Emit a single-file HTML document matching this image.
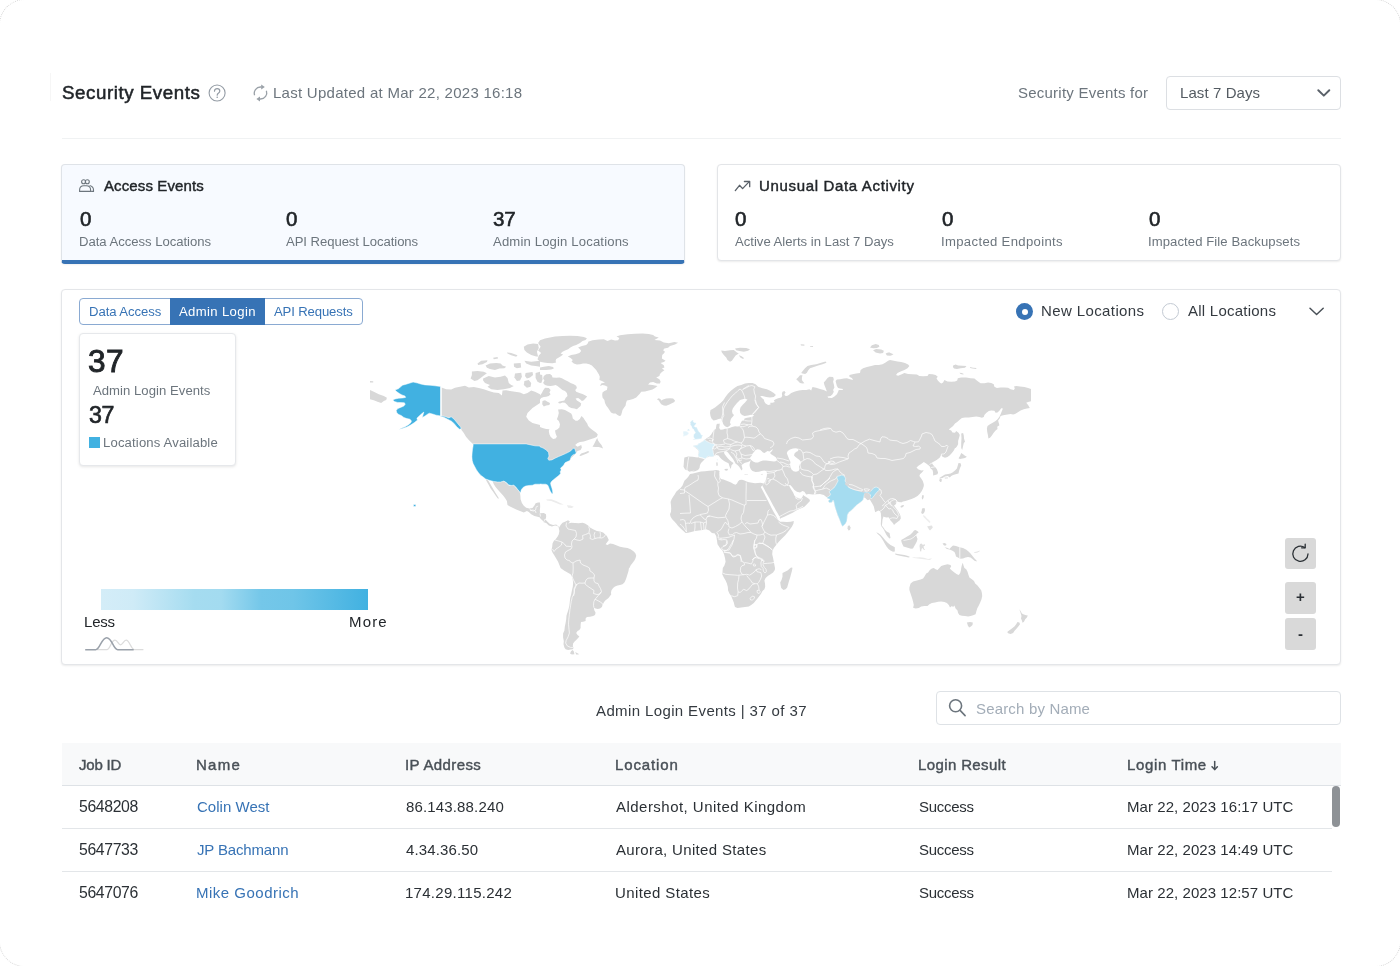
<!DOCTYPE html>
<html lang="en"><head><meta charset="utf-8"><title>Security Events</title>
<style>
html,body{margin:0;padding:0;background:#fff;}
body{width:1400px;height:966px;position:relative;overflow:hidden;font-family:"Liberation Sans",sans-serif;color:#212529;}
.t{position:absolute;white-space:nowrap;line-height:1;will-change:transform;}
.b{position:absolute;box-sizing:border-box;}
svg{position:absolute;overflow:visible;}
</style></head>
<body>
<div class="b" style="left:-1px;top:-1px;width:1402px;height:968px;border:1px dotted #d8d8d8;border-radius:26px;"></div>
<div class="b" style="left:50px;top:73px;width:1px;height:28px;background:#f6f6f6;"></div>
<div class="b" style="left:62px;top:138px;width:1279px;height:1px;background:#f0f2f3;"></div>
<div class="b" style="left:1166px;top:76px;width:175px;height:34px;border:1px solid #dcdfe3;border-radius:4px;background:#fff;"></div>
<div class="b" style="left:61px;top:164px;width:624px;height:100px;border:1px solid #dfe3e8;border-bottom:4px solid #3773b5;border-radius:4px;background:#f7faff;box-shadow:0 1px 2px rgba(0,0,0,.06);"></div>
<div class="b" style="left:717px;top:164px;width:624px;height:97px;border:1px solid #e3e5e8;border-radius:4px;background:#fff;box-shadow:0 1px 2px rgba(0,0,0,.08);"></div>
<div class="b" style="left:61px;top:289px;width:1280px;height:376px;border:1px solid #e4e6e9;border-radius:4px;background:#fff;box-shadow:0 1px 2px rgba(0,0,0,.08);"></div>
<div class="b" style="left:79px;top:298px;width:284px;height:27px;border:1px solid #8aaad2;border-radius:4px;background:#fff;"></div>
<div class="b" style="left:170px;top:298px;width:95px;height:27px;background:#3773b5;"></div>
<div class="b" style="left:79px;top:333px;width:157px;height:133px;border:1px solid #e6e8eb;border-radius:4px;background:#fff;box-shadow:0 1px 3px rgba(0,0,0,.10);"></div>
<div class="b" style="left:88.6px;top:437.4px;width:11px;height:11px;background:#41b1e1;"></div>
<div class="b" style="left:101px;top:588.5px;width:267px;height:21.5px;background:linear-gradient(90deg,#d4edf8 0%,#cfebf7 12%,#a5dcf0 35%,#a3dbf0 45%,#74c7e9 60%,#6fc5e8 72%,#41b1e1 100%);"></div>
<div class="b" style="left:1016px;top:303px;width:17px;height:17px;border-radius:50%;background:#3773b5;"></div>
<div class="b" style="left:1021.5px;top:308.5px;width:6px;height:6px;border-radius:50%;background:#fff;"></div>
<div class="b" style="left:1161.5px;top:303px;width:17px;height:17px;border-radius:50%;border:1px solid #c3cad3;background:#fff;"></div>
<div class="b" style="left:1285px;top:538.3px;width:31px;height:31.2px;border-radius:3px;background:#d9d9d9;"></div>
<div class="b" style="left:1285px;top:581.6px;width:31px;height:32px;border-radius:3px;background:#d9d9d9;"></div>
<div class="b" style="left:1285px;top:618px;width:31px;height:32px;border-radius:3px;background:#d9d9d9;"></div>
<div class="b" style="left:936px;top:691px;width:405px;height:34px;border:1px solid #dee2e6;border-radius:4px;background:#fff;"></div>
<div class="b" style="left:62px;top:743px;width:1279px;height:42px;background:#f8f9fa;"></div>
<div class="b" style="left:62px;top:785px;width:1279px;height:1px;background:#dee2e6;"></div>
<div class="b" style="left:62px;top:828px;width:1270px;height:1px;background:#e3e6e9;"></div>
<div class="b" style="left:62px;top:871px;width:1270px;height:1px;background:#e3e6e9;"></div>
<div class="b" style="left:1331.5px;top:786px;width:8.5px;height:40.5px;border-radius:4px;background:#8e9296;"></div>
<svg style="left:0;top:0" width="1400" height="966" viewBox="0 0 1400 966">
<defs><clipPath id="mc"><rect x="370" y="330" width="661" height="328"/></clipPath></defs>
<g clip-path="url(#mc)" stroke-linejoin="round">
<g fill="#d8d8d8">
<path d="M370,390.1 373.8,391.8 378.8,394.2 383.8,396.1 386.9,397.8 386.2,399.9 383.8,401.1 381.2,403 377.5,401.8 373.8,400.2 370,399.2Z"/>
<path d="M370,381 373.2,381.2 373.2,382.6 370,382.6Z"/>
<path d="M588.1,341.8 592.5,340.2 598.8,339.5 603.8,339.2 607.5,340.9 611.2,339.5 615,340.5 618.1,340.2 619.4,338 616.5,336.5 620,335.2 627.5,334.2 635,333.8 642.5,333.5 648.8,333.9 653.1,334.9 655,336.5 658.8,337.4 654.4,340.1 660,340.5 663.8,342.4 668.8,343.2 674.4,342 678.1,342.8 675,344.5 670,345.9 668.1,347.8 664.4,348.6 663.1,350.2 665,351.8 663.8,353.6 662.2,354.9 661.9,358.6 665.6,360.8 663.8,362 660.6,363 663.8,365.2 664.4,367.4 661.9,368.6 664.4,370.2 661.9,372 660,374 659.4,376.1 656.2,377.4 659.4,379.2 660.6,381.5 660,383.6 656.9,383.4 653.1,382.1 650,382.6 648.1,384.5 652.5,385.1 657.5,386.1 655,388 652.5,389.5 648.8,390.5 645,391.5 641.2,391.8 640,393.6 638.1,395.5 636.2,397.4 633.1,399 629.4,399.9 626.9,400.5 626,403 625.6,405.5 623.8,408 622.5,409.9 621.9,412.4 621,415.5 619.4,415.9 617.5,414.9 615.6,413.6 613.1,413.6 611,412.4 609.4,409.9 608.1,408 606.2,405.5 605,403 604.4,399.9 602.5,397.4 602.2,394.9 602.5,392.4 604.4,391.1 606.9,389.9 607.5,386.8 605,385.5 602.5,384.9 600,386.1 601.2,383.6 605,382.4 601.9,381.1 599.4,379.9 599.8,376.8 598.8,374.2 597.2,371.8 596.2,369.9 593.8,367.4 591.9,365.5 589.4,364.2 586.2,363.6 583.1,363.6 580,364.2 576.9,364.6 573.8,363.6 571.5,361.5 572.8,359.9 570.6,358 567.8,356.5 571.2,354.9 575.6,354.2 579.4,353 581.2,351.1 580,349.2 578.1,347.4 581.9,346.1 586.2,344.9 588.1,343Z"/>
<path d="M656.9,399.2 658.8,398.2 660.6,399.2 661.2,400.5 663.1,399.5 666.2,398.6 670,398.2 673.1,398.6 675,400.5 674.4,402 671.9,403.2 669.4,404.5 666.2,405.8 663.8,405.5 661.2,404.2 660,402.4 658.8,400.5Z"/>
<path d="M441.5,387.4 446.2,389.2 451.2,389.5 455,387.8 460,386.8 465,385.8 468.8,387.4 473.8,387 478.8,388 483.8,389.2 488.8,391.1 493.8,392.4 498.8,393 501.9,395.5 502.5,390.5 506.2,390.2 510,391.1 515,391.8 520,392.4 523.8,394.2 527.5,393 531.2,390.5 535,391.8 540,394.2 540,395.5 541.9,393 543.1,390.5 545,387.8 548.8,388 550.6,389.9 549.4,392.4 550.6,394.2 548.8,396.1 546.2,396.8 543.8,397 541.2,398 540,399.5 540,403 532.5,408 527.5,413 526.2,416.8 528.8,420.5 532.5,423 540,424.9 540,427 542.5,428 546.2,429 549.4,429.2 548.8,431.1 549.4,434.2 550.6,436.8 553.1,439 555.6,438.6 556.9,436.8 555.6,433.6 555,430.5 557.5,429.2 559.4,427.4 560,424.2 558.8,421.1 556.9,419.2 558.1,416.1 558.8,413 558.1,409.5 561.9,409.2 565,409.9 568.1,411.8 571.2,413.6 572.2,415.5 572.8,418.6 575.6,420.8 577.5,420.8 579.8,419 581.5,416.1 583.5,418 585.2,420.8 587.2,423.6 588.1,426.1 590,428 592.8,430.2 596,432.4 597.8,434.5 596.9,436.8 594.4,438 591.2,439 587.5,440.2 583.8,441.5 580,442 577.5,443 575.2,444.9 577.5,446.8 581.2,444.9 581.9,447.4 580.6,449.9 577.5,451.1 576.2,453 571.2,458 558.8,465.5 490,463 475,445.8 471.9,443 468.8,439.9 466,436.8 463.8,433 461.5,429.9 460.6,427.4 457.5,423.6 454,419.2 451.2,417 446.2,417.8 441.5,415.8Z"/>
<path d="M579.4,455.5 581.2,453.6 584.4,452.4 588.1,451.1 589.4,452 586.9,453.6 583.1,454.9 580.6,456.1Z"/>
<path d="M592.5,446.8 594,444.2 595.6,441.1 597.2,438 598.1,440.5 599.8,443 601.5,444.9 603.1,448.6 601.2,447.8 598.8,447 595.6,447Z"/>
<path d="M471.9,371.5 477.5,371.1 483.8,371.8 486.9,373.2 483.8,375.5 480.6,378 477.5,380.2 474.4,381.1 470.6,378.6 471.9,374.9Z"/>
<path d="M483.1,378.6 488.8,376.1 495,377.4 500.6,376.8 505,375.5 507.5,378 508.8,383 511.2,384.9 513.8,386.1 510,388 503.8,389.2 497.5,389.9 491.2,389.2 487.5,386.8 490,384.9 485,383 483.1,380.5Z"/>
<path d="M477.5,363.6 481.2,360.8 487.5,360.2 486.9,362 482.5,364.2 478.1,365.1Z"/>
<path d="M485.6,365.5 490,363.6 496.2,363 500.6,363.6 502.5,365.5 506.2,366.8 504.4,368.2 499.4,368.6 495,369.9 490,369 486.9,367.8Z"/>
<path d="M506.9,352.4 511.2,353 517.5,355.2 516.2,356.8 511.2,355.2 507.5,353.6Z"/>
<path d="M493.1,357.8 497.5,357 498.1,358.6 493.8,359.2Z"/>
<path d="M513.8,363.6 520.6,363 521.2,367.4 516.9,368.2 514,366.8Z"/>
<path d="M515,373.6 521.2,372.8 521.9,376.8 520,380.5 516.9,381.1 514.4,377.4Z"/>
<path d="M525.6,373 532.5,372 533.1,374.9 530,377.4 526.9,378.6 525,376.1Z"/>
<path d="M524.4,381.1 528.8,379.9 531.2,383 530.6,386.8 526.9,387.8 523.8,384.9Z"/>
<path d="M523.8,346.8 527.5,344.5 533.1,343.6 538.1,344 538.8,348 536.9,351.8 538.1,356.5 536.2,356.5 531.2,354.9 526.9,352.4 524.4,349.9Z"/>
<path d="M524.4,360.8 531.2,361.8 540,360.8 540,366.8 535.6,366.1 531.2,365.5 526.2,363.6Z"/>
<path d="M535.6,373 540,371.8 540,383 537.5,381.8 535.6,378Z"/>
<path d="M540,340.2 545,338.6 550,337.4 555,336.5 562.5,336.1 570,335.8 577.5,336.1 583.8,337 586.9,338.2 585.6,339.9 582.5,341.1 580,343 576.2,344.9 573.1,346.1 570,347.8 568.1,349.2 565,350.5 562.5,351.8 560.6,353.6 563.1,354.5 561.2,356.1 558.8,357.4 556.2,359 555.6,361.1 556.2,362.4 552.5,363.2 547.5,363 543.8,362.4 540,361.8 537.5,359.2 538.8,355.5 541.2,353 538.1,350.5 540.6,346.8 538.1,343Z"/>
<path d="M540,367.4 543.8,366.8 548.8,366.1 553.1,367 553.8,368.6 551.2,369.6 546.2,370.1 540,369.9Z"/>
<path d="M543.8,376.1 546.2,374.2 550,374 551.9,375.5 552.5,377.4 556.2,377.8 559.4,377.4 561.9,378.2 565,379.9 568.1,381.5 570.6,383 573.8,384.2 576.2,385.8 576.9,388 575.2,389.9 576.2,391.8 579.4,393 582.5,394 585,395.2 587.2,396.5 585.6,398.2 583.8,400.2 581.9,400.9 580,399.2 578.1,398 575.6,398.6 576.9,400.5 579.4,402 581.2,403.6 580.6,406.1 578.8,407.4 576.9,409.2 574.4,408.6 571.2,408 568.8,406.8 566.9,404.5 565,402.8 562.5,402.4 560,403.6 558.1,403 558.8,401.8 561.9,401.1 564.4,400.5 565.6,398 567.5,396.1 566.9,393 565,391.1 562.5,389.9 560,388 557.5,386.1 555.6,384.9 553.8,385.5 550.6,386.1 547.5,385.8 545,384.9 543.1,383 544.4,380.5 543.1,378.6Z"/>
</g>
<g fill="#ffffff">
<path d="M559.4,392 561.5,391.8 562.2,393.6 560.6,394.5 559.1,393.6Z"/>
</g>
<g fill="#d8d8d8">
<path d="M540,374.5 542.2,374.9 542.5,379.2 541.5,382.8 540,383Z"/>
<path d="M542.5,401.1 545,400.2 547.5,401.8 550,403 549.4,404.9 546.2,405.5 543.8,406.5 542.2,404.2Z"/>
<path d="M485.6,479.2 488.1,480.2 490,483.6 491.9,486.8 493.8,489.9 495.6,493 497.5,496.1 499,498.6 497.8,498.4 495.6,495.5 493.1,491.8 490.6,488.6 488.8,484.9 486.9,481.8Z"/>
<path d="M492.5,480.8 496.2,482 500,482 503.1,481.1 505.6,482.4 507.5,484.2 509.4,486.1 512.5,485.2 514.4,486.1 516.2,488 518.1,490.5 520,492.8 520.4,496.1 520.6,499.2 521.9,503 523.8,505.8 526.2,507.8 529.4,508.6 532.5,508 534.4,505.5 535.6,503.2 538.1,502.6 540,502.6 540.2,506.8 539.8,510.5 540,513.2 543.8,513 546,514.2 546.2,516.8 545.6,519.5 547.5,521.8 550,524 553.1,524.9 556.2,524.5 558.8,526.8 558.8,528 557.5,526.1 555,525.5 551.9,526.5 548.8,525.5 546.2,523 543.1,522 543.8,521.5 541.9,519.9 540,518 540,517.4 537.5,516.8 534.4,516.1 531.2,514.2 528.8,512 526.9,511.1 523.8,512.4 520,511.1 516.2,509.5 513.1,508 510,506.5 507.5,504.9 506.9,501.1 505,498 503.1,495.5 500.6,492.8 498.1,489.9 495.6,487 493.8,484.2Z"/>
</g>
<g fill="#ececec">
<path d="M546.2,499.5 551.2,499.2 556.2,501.1 560.6,503.2 563.8,504.5 560,504.5 555.6,502.8 551.2,501.1 546.9,500.5Z"/>
<path d="M566.9,505.2 570.6,505.5 573.8,506.8 571.9,508 568.1,507.8Z"/>
</g>
<g fill="#d8d8d8">
<path d="M558.8,528 560.6,524.9 562.5,522.8 565,521.8 568.1,520.2 570,521.8 568.1,523.6 571.2,522.8 575,523 578.8,523.2 582.5,522.8 585,523.6 588.1,525.5 590,527.4 593.1,529.2 596.9,531.1 600,531.5 603.1,532.4 605,534.2 606.9,536.1 608.8,539.9 607.5,541.8 605.6,544.2 607.5,544.9 610,543.6 613.1,544 616.2,545.2 620,546.8 623.8,547.6 627.5,548 630.6,549.2 633.1,551.1 635.2,553 636.2,555.5 635.6,558 634.4,560.5 632.5,563 630.6,565.5 629.4,568 629,568 628.5,571.1 627.5,574.2 626.5,577.4 625.6,579.9 624.4,582.4 622.5,584.2 620,584.9 617.5,585.5 615,586.5 613.1,588 611.5,590.2 611,592.4 611.2,594.5 610,596.1 608.5,598 606.9,599.2 605,600.8 603.8,602.4 602.5,604.9 601.9,607 600,608.6 597.8,609 595.6,608.6 593.8,607.8 594.4,610.5 595.6,612.8 595,614.9 593.1,616.1 590,616.8 586.9,617 585.6,618.6 585.6,621.1 583.1,621.8 581,622 580.6,624.9 580.6,628 579.4,629.9 577.5,631.1 576.2,633 577.5,634.9 579.4,636.5 578.1,638 576.2,639.9 574.4,641.8 573.1,643.6 572.8,646.1 573.5,648 572.8,649.2 570.6,649.5 568.1,649.9 565.6,649.2 564.4,647.4 563.5,644.2 563.8,641.1 563.1,637.4 563.1,633.6 564.4,630.5 564.8,626.8 565.6,623 566.2,619.2 566.5,615.5 567.5,612.4 568.5,609.2 569.4,605.5 569.8,601.8 570.2,598 571.2,594.2 571.9,590.5 572.8,586.8 573.1,583 572.8,579.9 571.9,576.8 570.6,574.2 567.5,572.4 564.4,570.8 561.2,568.6 560.6,568 559.4,564.9 558.1,561.8 556.2,558.6 554.4,555.5 552.5,552.4 551.5,549.9 552.2,546.8 552.5,543.6 553.8,541.1 555.6,539.2 557.5,536.8 558.8,534.2 559.4,531.1Z"/>
<path d="M570,653.6 571.2,651.1 572.8,649.9 573.8,651.5 574.4,654.2 571.9,654.5Z"/>
<path d="M575.2,652 577.5,653.2 579,654.5 576.2,654.5Z"/>
<path d="M722,420 721,418.5 718.5,419 716,420 713.5,420.5 711.5,418.5 710.5,416 710,413 710.5,410 712.5,409 715,407.5 717.5,405.5 720.6,403 723.1,400.5 725.6,396.8 728.1,393.6 731.2,390.5 734.4,388 737.5,386.1 741.2,384.9 745,383.6 748.8,383 752.5,383 755.6,384.2 758.1,386.8 762.5,388.2 766.9,389.2 770.6,391.1 773.8,393 775.9,395.1 773.8,397 770,397.6 766.2,397 762.5,396.1 760.2,396.1 761.9,398 763.8,399.5 764.4,401.8 765.6,403.6 768.1,404.9 770.6,404.5 770.2,402.8 772.5,402.8 774.8,402 773.8,400.5 775.6,399.2 778.1,398.2 781.2,397.6 782.2,396.1 781.9,393.6 782.5,391.8 784.4,391.1 785.6,392.4 784.4,394.2 785,395.8 786.9,396.1 788.8,394.9 791.2,393 795,391.5 798.8,390.5 802.5,390.1 806.2,389.9 809.4,389.2 811.2,390.5 811.9,388.6 812.5,387 816.2,387.8 820,388.9 823.8,390.1 826.9,391.5 825.6,388 824.4,384.9 823.8,382.4 825.6,380.5 827.5,378 829.4,376.8 833.1,377 833.8,379.2 833.1,381.8 833.8,384.2 834.4,387.4 833.1,389.9 833.8,391.8 832.5,394.2 830.6,396.1 827.5,396.5 828.1,397.8 831.9,398 834.4,396.5 836.9,394.2 838.1,391.8 838.8,390.1 842.5,390.1 843.1,389 840,388.6 838.1,388 836.9,386.1 836.2,383.6 835.6,381.1 836.9,379.5 840,379.2 843.8,378.6 846.9,378.2 850,379.2 853.1,379.9 851.9,378 849.4,376.8 849.4,374.9 852.5,374.2 856.2,373.6 860,373 860.6,369.9 863.1,368.2 866.9,367 871.2,366.1 875,364.9 878.8,364.9 882.5,364.2 885.6,362.4 888.1,360.8 890,359.9 890,359.9 893.8,360.8 897.5,361.5 901.2,362 905,363 908.1,364.5 909.4,366.1 907.5,368.2 904.4,369.9 900.6,371.5 897.5,373 896,374.9 898.1,375.8 901.2,374.5 904.4,373 908.1,374 912.5,374.2 916.9,374.5 919.4,375.9 923.1,376.2 927.5,375.9 928.8,374 932.5,374.2 935.6,374.9 937.8,376.8 936.5,378.2 937.8,380.5 940,382.8 941.5,383.6 943.1,382.4 944.4,379.9 947.5,381.5 951.2,381.8 955,381.5 957.2,380.5 957.8,378.2 961.2,377.4 966.2,377.6 970.6,378.2 974.4,378.6 976.2,379.9 978.1,381.5 980.6,383.2 984.4,383.2 988.1,382.6 991.2,383 993.8,384.2 994.4,386.8 996.9,388 1000.6,387.6 1004.4,387.4 1008.1,387.8 1010.6,389.2 1013.8,389.9 1014.8,388.6 1014,386.4 1016.2,386.1 1020,386.5 1024.4,387.1 1028.1,388 1031.9,389.2 1031.9,401.1 1028.1,402 1026.2,402.8 1028.1,404.9 1029.8,408 1026.9,408.6 1023.8,409.2 1020.6,410.5 1017.5,412.4 1015,414 1013.1,414.6 1010.6,414 1007.5,414.5 1004.4,414.9 1002.2,415.5 1000.6,416.1 999.8,418.2 998.1,420.5 998.8,423 999.4,425.2 997.2,426.8 997.5,429 995.6,430.5 993.5,433 991.9,435.5 990,437.8 988.4,438.6 987.9,434.9 987.2,431.8 986.9,428.6 987.5,426.1 990,424.2 993.1,422.4 995.6,421.1 997.5,419.2 999.4,416.8 1000.6,414.2 1001.9,411.1 1002.9,408.6 1001.2,408.2 999.8,410.2 997.5,412.4 995.6,412.8 994.4,410.8 991.2,410.5 988.8,411.1 986.2,413 984.4,414.9 983.8,417 981.9,417.8 979.4,417 976.2,416.5 972.5,417.1 968.8,417.4 965,417.4 961.9,418 959.4,419.9 957.5,421.8 955,423.6 953.1,426.1 950.6,428 948.8,429.5 951.2,430.5 952.5,432.4 955,432.8 956.2,431.1 958.5,432.8 959.8,434.9 959,438 958.1,441.1 958.1,444.2 956.9,446.5 955.6,448 955,448 953.8,450.5 951.9,453 949.8,455.2 947.5,457 945,457.8 942.5,456.8 941.2,454.9 940,457.4 938.1,459.2 936.2,460.5 933.8,461.8 931.9,463 933.1,464.9 935,466.8 936.9,469.2 938.1,472.4 937.5,474.2 935,474.9 933.1,475.5 933.1,472.4 932.5,469.9 930.6,468.6 930,466.8 928.8,465.5 926.2,463.6 923.8,462 921.2,464 918.8,465.5 916.5,467.4 918.1,469.2 921.2,470.5 923.8,470.2 921.9,472.4 920,474.2 919.4,476.1 921.2,478.6 922.8,481.1 923.8,484.2 923.8,486 923,488.5 921.8,491 920,493.5 917.5,496 914.5,497.8 911.5,499 908.5,500 905.5,501 903,501.5 901,502.5 899,502 897,501.5 896.5,503 895.5,504.5 894,505.5 895,507 896.5,509 898,511 899.5,513.5 900.5,516 900.8,518.5 899.5,520.5 897.5,522 895.5,523.5 894,525 893.5,524 892,522 890.5,520.5 889.5,518.5 888.5,517.2 886.5,517.5 884.5,517 883.5,516.5 883,518 882.5,519.5 882.2,523 881.8,525.5 883,527 884.5,529 886,531 887.5,532 889.5,533 890,535.5 890.5,538 889.5,538.5 888,537 886.5,535 885.2,532.5 884,530 882.5,527.8 881.2,526 880.8,524 881,521 881.2,518 881,515 880.8,513 880,511.2 878.5,510.5 877,511.2 875.2,512.2 874.5,509.5 873.8,506.5 872.5,504 871,501.5 869.5,499 867.5,499.9 865.6,498 863.8,497.4 863.1,499.9 861.2,501.8 858.8,503.6 856.2,505.5 853.8,508 851.2,510.5 848.8,512.4 847.5,514.9 847.2,518 846.9,521.1 845.6,523.6 843.8,525.5 842.5,526.5 841.2,524.2 840,521.1 838.8,518 837.5,514.9 836.2,511.1 835.2,508 834.4,504.9 833.8,501.8 833.1,500.2 831.9,502.4 829.4,502.8 828.1,501.1 829.8,499.2 827.5,498.6 826.9,497.4 823.8,494.9 820,494 816.2,494.2 812.5,494.5 808.8,494 806.2,494.5 804.4,491.8 802.5,491.1 800,492.4 796.9,491.8 794.4,489.9 792.5,487.4 790.6,485.2 788.8,484.9 790,487.4 791.5,489.9 793.1,492.4 794.4,495.5 796.2,497.4 798.8,498 801.2,498.6 802.5,496.8 803.1,494.9 804.4,496.1 806.9,497.4 809.4,499.2 810,501.1 808.1,503 806.2,504.9 804.4,506.8 801.9,508 798.8,509.2 796.2,510.5 793.1,512.4 790,514 786.9,515.5 783.8,517 780.6,518.2 780,519.5 780,518 779.1,516.1 777.8,513.5 776.1,510.8 774.5,507.8 772.9,504.9 771.2,501.8 769.5,498.5 767.6,495.2 765.6,491.8 763.8,488.2 762.2,485.5 764.2,483.5 765,481.5 766,479 766.8,476 767,473.5 766.5,471 764,470.5 761.5,471 759,471.8 755.5,472 752.5,471 751,469.5 750,467.5 749.5,465 750,462.5 751,460 750,461 748,462 746,462.5 744.5,463 743,464 741.5,465 742,467 742.5,469 741.5,470.5 740,468 739,466.5 737.5,465 735.5,463.5 734.5,461.5 733,459 731,456.5 729.5,454.5 728,452.5 726.5,451.2 725,451.2 724,452.5 724.5,454 726,456 728,458.5 730,460.5 732,462 733.5,463 732.5,464.2 731.5,465.2 731.2,467 730.5,469 729.8,467 729,465 728.8,463.5 727,462.5 724.5,461.2 722,459.5 720,457.5 718.5,455.5 716.5,455 714.5,455.5 712.5,457 709.5,456.8 706.5,457.5 705,459 703,461 701,463 700,465 699.5,468 698,470 695,471.2 692,471.8 690,472.2 695,470.5 691.9,471.1 689.4,471.8 687.5,470.5 685,469.5 683.5,466.8 683.8,463.6 684,460.5 684.4,457.4 688.1,456.5 692.5,456.8 697.5,457.4 698.5,457 698.2,454.5 698.8,451.5 697.5,449.5 695,447.5 693,446 695.5,445.2 698.5,444.5 700.5,443 703,441 705,439.5 707,438 709.5,436.5 711.2,434.5 712.5,432.2 714,430 715.8,429 716.2,426.5 716.5,424.5 718,423.5 719.5,424.2 720,422.5Z"/>
<path d="M764.2,483.5 762.5,483.2 760.5,482.8 758,483 755,483.2 752,482.8 749,482.2 746.5,481.5 744.5,480.5 742,479.8 739.5,480 738,481.5 737,483.5 735.5,484.8 733.5,484 731,482.5 728.5,481.5 726,480.5 723.5,479.5 721,479 720,477.5 719.5,475 720,472.5 719,470.5 716.2,470 713,470.5 709,470.8 705,471.2 701,471.5 697,472.5 693,473.5 690,474 689.4,474.9 688.1,477 686.2,479 684.4,480.8 683.5,483 682.5,485.5 680.6,488 678.1,489.9 676.2,491.8 674.8,494.2 673.1,496.8 671.5,499.5 670.6,502 671,505.5 671.2,508.6 671,511.8 670,514.2 670.6,516.8 672.2,519.2 674.4,521.5 676.2,523.6 678.1,526.1 680.6,528.6 683.1,530.8 685.6,533 688.1,532.8 691.2,532 695,531.1 698.8,530.5 702.5,529.9 706.2,529.2 709.4,530.5 711.9,533 715,533.6 715,534 716.2,536.1 716.9,539.9 717.5,544.2 720,548 722.5,550.8 724,554.2 725,558 725.6,561.8 724.4,565.5 722.8,568 722.8,568 722.5,571.8 722.2,574.2 723.8,577.4 725.6,580.5 726.9,583.6 727.8,586.8 728.1,590.5 729.4,593.6 731.2,596.1 732.5,599.2 733.8,602.4 734.4,604.9 735,607 737.5,608 741.2,607.4 745,607 748.8,606.5 751.2,604.9 753.8,603 755.6,600.8 757.5,598.6 759.4,596.1 761.2,593.6 762.5,591.1 764.4,589.2 765.2,586.8 765,583.6 764.4,580.5 765.6,578 768.1,575.8 770.6,574.2 773.1,572.4 774.8,569.9 775,568 775,568 774.4,564.9 773.8,561.8 773.1,558 772.2,554.2 772.5,551.1 773.8,548 776.2,544.9 778.8,541.8 781.9,538.6 785,535.5 787.5,532.4 790,529.2 791.9,526.8 793.5,523.6 793.8,521.1 790.6,521.8 786.9,522 783.1,521.8 780.2,521.8 778.6,520.5 776.9,517.5 775,514.2 773.1,511 771.4,507.8 769.8,504.5 767.9,500.8 766,497 764.1,493.2 762.4,490 760.8,487Z"/>
<path d="M782.5,573 785,571.8 787.5,570.5 789.8,568.6 791,567.4 792.5,567.8 791.9,571.1 791,574.2 790,578 789,581.1 788.1,584.2 787.2,587.4 785.6,589.2 783.5,589.9 781.2,588 780.6,584.9 780.2,582.4 781.5,579.9 782.5,576.8Z"/>
</g>
<g fill="#ffffff">
<path d="M720,421.5 721.8,420.5 722.5,422.5 723.5,424.5 725,426.2 727.2,427.2 729.2,426.3 730.8,424.5 730,422.5 730.5,420 731.5,418 733,416.5 734,415 732.5,413.5 732,411 732.8,408.5 734.5,406 737,403 740,400 744.5,398.8 747.5,399.5 745,402.5 742.5,405 740.5,407.5 739.8,410 740.2,413 742,415 744.5,416 748,415.5 751,414.8 754,415 753,416.5 750,417.2 747,417.8 744.5,418.5 744,420.5 742,420.8 741,422.5 740,424.5 739.8,426.2 737.5,426.5 735,426.2 732,427 729.5,428 727,428.7 725,428.7 723,429.4 720.5,429.7 719.2,428 719.5,426 719.8,424Z"/>
<path d="M751.5,456 752.5,454 754,452 755.5,450 757.5,449.2 760,449.8 761.5,451 763,452.5 764.5,453 766,452 767.5,451 769.5,451.5 771.5,450 773,449 772,451 770,453 771.5,454.5 774,456 776,457.5 777,459.5 776.5,461 774,461.5 770,461 766,460.5 763,460.5 760,461.5 758,462.5 755.5,462.5 753,461.5 751.2,460 750,458.5 750.5,457Z"/>
<path d="M790,449.5 793,448.5 796,448.2 798.5,449 798,451 796,452 794.5,453.5 794,455.5 795.5,457 797.5,458.5 799.5,460 801,462 800,464 799,466.5 799.5,469 798.5,471 796,471.8 793.5,471.2 791.5,469.5 790.5,467 790,464.5 790.5,462 789.5,460 788.5,457.5 787.5,455 786.8,453 787.8,451Z"/>
</g>
<g fill="#d8d8d8">
<path d="M721.2,350.5 725,351.1 730,350.2 733.8,349.9 736.9,352.4 738.8,353.6 735.6,355.5 733.8,358 731.9,360.8 730,361.8 727.5,359.9 726.2,357.4 723.8,354.9 721.9,352.4Z"/>
<path d="M735,348.6 740,347.8 746.2,348 750,349.2 748.1,350.8 743.8,351.8 739.4,351.1 736.2,350.2Z"/>
<path d="M738.8,355.2 741.2,356.1 744,358 743.1,358.9 740.6,357.8Z"/>
<path d="M800.6,344.2 804.4,344.6 804.4,345.8 801,345.5Z"/>
<path d="M810,345.9 813.1,346.1 812.9,347 810.2,346.8Z"/>
<path d="M801.2,373 803.1,370.5 805,368.2 807.5,366.1 811.2,365.1 816.2,364.2 821.2,362.8 825.6,361.5 826.5,362.8 822.5,364.2 818.1,365.5 813.8,367 810,368.2 808.1,370.5 806.9,372.8 805.2,374 802.5,373.6Z"/>
<path d="M796.2,379.2 798.1,377.4 800,375.2 802.5,375.2 801.9,377.4 801.9,379.9 803.1,381.8 804.4,383.2 802.5,383.6 800,383 798.1,381.1Z"/>
<path d="M870,347.4 871.9,345.2 875.6,344 878.8,344.9 879.4,346.8 876.9,348 873.1,348.2Z"/>
<path d="M873.1,350.2 876.2,349 881.2,349.5 883.8,350.8 883.1,353 880,353.4 875.6,352.4Z"/>
<path d="M885.6,353.6 888.1,352.4 890,352.4 890,352.8 893.5,354.2 891.2,355.5 890,355.8 886.9,355.5Z"/>
<path d="M953.1,365.5 955.6,364.6 958.1,365.5 962.5,365.8 966.5,366.1 965,367.8 960.6,368.2 956.9,369 954,368.6 952.9,367Z"/>
<path d="M970,367.1 973.1,367.8 976.5,368 976,368.9 972.5,368.6 970.2,368Z"/>
<path d="M959.4,372.8 961.9,373 963.8,374 963.1,374.6 960.6,374Z"/>
<path d="M961.2,433.6 963.1,433 963.8,435.5 964,438.6 965,441.8 963.8,443 963.1,446.1 962.2,449.9 961.2,448 961.2,443 961.5,438Z"/>
<path d="M961.2,453 963.1,454.2 965,455.8 966.9,456.8 965,458 962.5,458.6 960,459 958.5,458.2 960,456.1Z"/>
<path d="M958.5,463 960.6,463.2 961.2,465.5 960,468 959,471.1 958.5,473.6 955.6,474.2 953.1,474.9 951.2,476.1 949.8,477.4 947.8,476.1 945,476.5 942.5,478 940,478.6 939.4,478 942.5,476.1 945,474.6 948.1,474 950.6,473.6 952.5,472.4 955,470.5 956.9,468.6 957.8,465.5Z"/>
<path d="M939.8,478.6 941.9,479.2 941.5,481.8 940,482 939.4,480.2Z"/>
</g>
<g fill="#e4e4e4">
<path d="M944.4,477.5 947.8,477.2 948.1,478.5 945,478.8Z"/>
</g>
<g fill="#d8d8d8">
<path d="M922.2,495.2 923.5,495 923.8,497 923,499 922,499.5 921.8,497.5Z"/>
<path d="M900.5,506.2 902,505.2 904,505 903.5,506.5 902,507.5 900.8,507.5Z"/>
<path d="M922,508.5 924.5,508 925,510 924.5,512 923.5,513.5 922,514 921.2,512.5 921.8,510.5Z"/>
</g>
<g fill="#e2e2e2">
<path d="M927,526.5 930,525.8 932,525.5 932.8,527.5 931.5,529 930,530.5 929,529.5 928,527.8Z"/>
</g>
<g fill="#eeeeee">
<path d="M923,515 925,516 927,518.5 929,520 930.5,522 929.5,523 927.5,521 925.5,519 923.5,517Z"/>
</g>
<g fill="#d8d8d8">
<path d="M876.2,532.2 878,533 880.5,534.8 883,537.5 885.5,540.5 888,543 890.5,545 893,546.2 894.8,547.2 894.8,551.5 893,551.8 890.5,550.5 888.5,549 886.5,546.5 885,544 883.5,541.2 881.8,538.5 880,536 878,534.2Z"/>
<path d="M895.2,553.5 898,554 901,554.5 904.5,555 908,556 910,557 908.5,557.5 905,556.8 901,556 897.5,555.2 895.2,554.5Z"/>
</g>
<g fill="#ebebeb">
<path d="M912,557 916,557.5 920,557.2 924,557.8 928,559 932,558.2 930,560 926,559.5 922,559 918,558.5 914,558Z"/>
</g>
<g fill="#d8d8d8">
<path d="M901.2,540 903,539 905.5,537.5 908,536 910.5,534.5 912.5,532.5 914,530.5 915.5,530 917.2,531 918.8,532.2 917,533.5 916,535 916.8,537 917.5,539 916.8,541.5 915.5,544 914,546.5 913,548.5 911,548.8 908.5,548 906,547.2 903.5,546.5 902.5,544.5 901.5,542Z"/>
</g>
<g fill="#dedede">
<path d="M920,544 921.5,543.5 923,545 924.5,544 925,545.5 923.5,546.5 924,548.5 925,550 924,550 922.5,548 921.5,549 921.2,551.5 920,551.2 919.8,548 919.5,546Z"/>
</g>
<g fill="#d8d8d8">
<path d="M942.5,543.5 944.5,543 946.5,544 946,545.5 944,545.5Z"/>
<path d="M944.5,547.2 947,547.8 949.5,549 951,547.2 953,545.5 956,546 959.5,547.2 963,548 966,549.5 968.5,551.5 970.5,553.5 972.5,556 974.5,558.5 976.5,560.5 976.8,561.5 974.5,560.8 972.5,559 970.5,557.5 968,557 965.5,557.5 963,558.5 960,558.8 958,557.5 956,556.5 955.5,554.5 954.5,552 952,550.5 949.5,549.5 947,549Z"/>
</g>
<g fill="#e6e6e6">
<path d="M974,552.2 977,551.5 979.8,550.5 979.5,551.5 977,552.8 974.5,553Z"/>
</g>
<g fill="#d8d8d8">
<path d="M847.8,526.1 849.4,525.2 850.6,527.4 850,529.9 848.5,530.5 847.5,528.6Z"/>
<path d="M909.4,587.4 910.6,583.6 913.1,581.5 916.9,580.5 920.6,579.5 923.1,578.6 924.8,576.1 926.2,573.6 928.1,572.4 929.8,569.9 931.9,568.6 933.8,568 935.6,569.2 937.5,569.9 939.4,568 941.2,566.1 944.4,564.9 947.5,564.2 950.6,564.9 951.2,566.5 949.8,568.6 951.9,570.5 954.4,572.4 956.9,574.2 958.8,574.9 960.2,573 961,569.9 961.2,568 961.9,564.9 962.8,562.8 963.5,565.5 964.4,568 966.2,569.2 967.5,571.8 968.5,574.9 969.4,577.4 971.9,579.2 974,581.1 975.2,583.6 977.5,585.5 979.4,588 981.2,590.2 981.9,593 982.2,596.1 981.5,599.2 980.2,602.4 978.8,605.5 977.2,608.6 976.2,611.8 975.6,614.2 973.1,615.2 970.6,616.1 968.1,616.5 965,616.1 961.9,615.8 959.4,614.9 958.1,613 957.5,610.5 955.6,608.6 954.4,605.5 953.1,607 951.9,606.1 950,607.4 948.8,604.9 946.9,603 944.4,602 941.2,601.5 938.1,601.8 935,602.4 931.9,603 929.4,604.2 927.5,606.1 924.4,606.1 921.2,606.5 918.8,608 915.6,608.6 913.1,607.8 913.8,604.9 913.1,601.8 912.2,598.6 911.2,595.5 910.2,592.4 909.4,589.9Z"/>
<path d="M966.9,622.4 970,622 972.8,622.4 972.5,624.9 970.6,626.8 969,627.4 967.8,625.2Z"/>
<path d="M1019.4,609.2 1020.6,611.1 1021.9,613.6 1023.8,614.5 1026.2,615.2 1027.8,615.5 1026.9,617.4 1025.2,619.2 1024,621.8 1022.5,622.8 1021.9,620.5 1021,618.6 1021.5,616.1 1020.6,613Z"/>
<path d="M1017.5,622 1019.4,622.4 1020,624.2 1018.1,626.8 1016.2,629 1014.4,631.1 1013.1,633 1010.6,634 1008.1,633.2 1007.2,632 1009.4,630.2 1011.9,628.6 1014.4,626.5 1016.2,624.2Z"/>
<path d="M724.5,469 727.5,468.8 728,470 726.5,470.8 724.8,470.2Z"/>
<path d="M716.2,462.5 717.5,462.2 717.8,465.5 716.5,466Z"/>
</g>
<g fill="#e3e3e3">
<path d="M760.5,474.5 763,473.8 762.2,475.2Z"/>
<path d="M744.5,474.2 748,474.4 748,475 744.6,474.9Z"/>
</g>
<g fill="#a5dcf0" stroke="#fff" stroke-width="0.5">
<path d="M836.9,476.5 839.4,475.8 841.9,474.9 844.4,476.1 845.6,478.6 845,481.1 846.9,483 849.4,484.9 852.5,487 855.6,488.6 858.8,489.9 861.9,491.1 864.4,491.8 866.9,492 870,491.8 871.9,489.9 873.8,487.8 876.2,487 878.8,488 879.4,489.9 877.5,491.8 875.6,493.6 874.4,495.5 872.8,497.4 871.2,499 870,497.4 870.6,494.9 868.8,493.6 866.2,493 864.4,494.2 863.8,497.4 863.1,499.9 861.2,501.8 858.8,503.6 856.2,505.5 853.8,508 851.2,510.5 848.8,512.4 847.5,514.9 847.2,518 846.9,521.1 845.6,523.6 843.8,525.5 842.5,526.5 841.2,524.2 840,521.1 838.8,518 837.5,514.9 836.2,511.1 835.2,508 834.4,504.9 833.8,501.8 833.1,500.2 831.9,502.4 829.4,502.8 828.1,501.1 829.8,499.2 827.5,498.6 826.9,497.4 829.4,496.1 830.6,494.2 829,491.8 831.2,489.9 833.8,488 835.6,485.5 836.9,483 838.1,480.8 837.2,478.6Z"/>
</g>
<g fill="#cfeaf6" stroke="#fff" stroke-width="0.5">
<path d="M692.4,419.9 693.3,420.1 693.1,421.5 694.2,422.5 696.1,422.7 696.3,423.6 695.4,424.8 694.2,426.2 695.2,426.9 696.8,427.1 697.3,428.5 698,429.7 698.4,430.8 699.3,432 700.5,432.9 701,434.1 701.4,435 702.8,435.3 703.1,435.7 702.1,436.4 701.9,437.8 701.7,438.8 699.8,439 698,439.2 696.1,439.5 694.2,439.7 692.8,439.9 693.1,439.2 694.7,438.5 694,437.6 693.1,436.9 693.8,436 693.3,435 694.2,434.1 695.4,432.7 694.7,431.5 694,430.4 693.3,429 692.4,428.7 691.9,427.6 691.4,426.2 690.5,425 690,424.1 690.5,423.2 690,422.5 691,421.3Z"/>
<path d="M687,429.9 688.4,429 689.8,429.9 689.6,430.8 687.7,430.8Z"/>
</g>
<g fill="#e3f3fa" stroke="#fff" stroke-width="0.5">
<path d="M683,431.3 684.9,431.1 686.8,431.3 688.4,432.5 688.9,433.6 687.9,434.8 686.8,435.5 684.9,436 683.5,436.7 683,436 683.3,434.6 683,433.2Z"/>
</g>
<g fill="#d6eef8" stroke="#fff" stroke-width="0.5">
<path d="M693.1,445.5 695.2,445.3 698,444.8 698.2,443.2 699.8,443 701.7,441.8 703.5,441.1 704.5,439 705.4,440.4 707.3,441.6 709.6,442.7 711.9,443.4 714.7,444.1 715,445 714,446 713.6,447.6 712.4,449.2 713.1,450.9 713.3,452.7 713.8,454.6 714,455.5 712.9,456.7 711,456.9 708.7,456.2 707.3,456.7 705.9,458.6 704.5,458.8 702.6,457.9 700.3,457.4 698.4,456.7 698.2,454.6 698.9,452.3 698.6,450.4 697.5,449.2 696.1,447.6 694.2,446.7 693.1,446.4Z"/>
<path d="M716.8,459 717.8,459 717.9,460.6 717,460.6Z"/>
</g>
<g fill="#d8d8d9">
<path d="M845.6,481.8 848.1,483.6 851.2,485.5 855,487.4 858.8,489 862.5,490.5 864.4,491.1 864.4,492.8 861.2,492 857.5,491.1 853.8,489.9 850,488.2 846.9,486.1 845,484.2Z"/>
<path d="M866.5,490.2 870.6,490.5 871,492 866.9,492.2Z"/>
<path d="M864.4,493 866.9,492.8 869.4,494 870.6,496.8 870,499.2 867.8,500.2 865.6,498.2 864.4,495.8Z"/>
</g>
<g fill="#41b1e1" stroke="#fff" stroke-width="0.5">
<path d="M473.1,443.9 473.1,445.8 472.5,449.2 472.1,453 471.9,456.8 472.2,460.5 473.1,463.6 474.8,466.8 476.5,469.9 478.5,472.8 480.6,475.2 483.1,477 485.6,479 490,480.5 493.8,481.5 497.5,482 500.6,482 503.8,481.1 506.2,482.4 508.8,484.9 511.2,485.5 513.8,485.2 515.6,486.8 517.5,489.2 519.4,491.5 520.6,492.8 521.2,489.9 523.1,487.4 525.6,486.1 528.8,485.5 532.5,485.2 535,484.2 540,484.2 540,484 542.5,484.2 545.6,484.2 547.5,484.9 548.5,486.8 549.4,489.2 550.6,491.8 552.1,494 552.9,493.2 552.5,490.5 551.9,488 551,485.5 550.6,483 551.9,481.1 553.8,479.5 555.6,478 557.5,476.5 559.4,474.9 560.6,473.6 560.2,471.8 561.2,469.9 560.6,468 562.2,466.8 563.8,464.9 565,462.8 567.5,461.5 570,460.5 570.6,458.6 571.2,456.8 572.8,454.9 575,454.2 576.2,453 575.2,449.9 574.4,448 572.8,448.6 571.2,450.5 568.8,452 565.6,453.6 562.5,454.9 558.8,456.5 555,458.2 551.9,459.9 548.8,460.2 547.8,458.6 549,456.1 548.5,452.4 546.2,449.9 543.1,448 540,446.8 540,446.1 535,445.8 530.6,444.9 526.2,443.9Z"/>
<path d="M413.5,504.5 415.8,504.5 415.8,506.5 413.5,506.5Z"/>
<path d="M440.6,386.5 435,385.8 430,385.2 425,384.9 420.6,384 417.5,383 413.1,382.1 410,383 406.2,384.2 402.5,385.2 400.6,386.8 398.8,388.6 395,390.1 396.9,391.8 399.4,393.6 401.9,394.9 405,396.1 405.6,397.4 402.5,398 398.8,398.2 395,399 392.8,399.9 394.4,401.5 397.5,402.4 401.2,402.6 404.4,402.8 405.2,404.2 403.8,406.1 400.6,407.4 397.8,408.6 396.2,410.5 396.9,413 398.8,414.5 401.2,415.5 403.8,417.4 406.9,418.6 410,419.2 411.5,421.1 410.6,423 408.1,424.9 405,426.8 401.9,428 398.8,429.5 402.5,428.6 406.9,427 410.6,425.1 414.4,422.6 417.5,420.1 416.9,418.2 419.4,415.8 421.9,413.6 423.8,412.1 423,414.9 422.2,417.4 425,416.1 427.5,414.2 429.4,413.2 432.5,414 436.2,415.2 440.6,415.9Z"/>
<path d="M440.6,415.5 445,416.5 448.8,417.8 451.2,416.8 454,419 457.1,422.8 460.2,426.5 461.5,428.6 459.6,429.2 456.9,427 454.4,423.9 451.9,421.4 448.1,419.5 443.8,417.2 440.6,416.2Z"/>
</g>
<path fill="none" stroke="#fff" stroke-width="0.7" d="M698,475 698.5,477.5 698,480 695,481.5 692,483.5 689,485.5 685,487.5 684.5,490M680,489.5 684.5,490 684.5,493 680,493.5M684.5,490.5 689,493.5 694,497 699,500.5 704,504 708,506.5M689,495 689.5,500 690,506 690.5,513 685,513.2 680,513.5M722.5,497.8 720,499 716,501.5 712,504 708,506.5 708.5,510 707.5,513 704,513.8 700,514.5M715,471 714.5,476 716,479 718,482 717.8,485 718.5,488 718,492 719,495.5 722.5,497.8M719.5,472 720,476 719.5,479 720.5,481 718.5,483M722.5,497.8 726,498.5 728.5,499 732,500 736,501.8 740,503.5 744,505.2 746,504.5M746.2,482.5 746.2,488 746,495 746,504.5M747,500.5 766.5,500.5M728.5,499 729.5,504 729,509 727,512.5 725.5,515.5 726,517.5M744.5,505.2 744,509 743.5,512.5 741.5,515.5 741,519 742,522 743.5,524M707,517 710,516 714,517 718,517.8 722,517.5 725.5,517.2M726,517.5 727.8,520.5 728.5,523.5 727,524.5 725.5,522 724,524 722.5,527 721,529.5 718.5,531 717,532.5M728.5,523.5 729,527 732,528 735.5,526.5 739,524.5 742,522M743.5,524 746,527 749,530 751,532.5M729,528.5 728,532 729.5,535 732.5,534.5 734.5,533 736.5,532.5 740,534 744,533.5 748,532.5 751,532.5M745,524 747,522.5 750,524 754,523.5 758,523 759,520 761,519.5 762,522 762.5,524.5 762,526.5M762,526.5 763.5,530 765,532 763.5,534 760,535 757,535 754,534 751,532.5M762,526.5 764,522 766,518 767.5,515 768,511 769.5,509.5M767.5,515 770.5,514.5 773.5,515.5 776,517.5 778.5,520M778.5,522 781,524 784,525.5 787,526.5 789,527.5 786,530.5 783,532.5 779,534 776.5,535M765,532 768,534 771,535.2 774,535 776.5,535 775.8,538 775.8,542 776.5,544.5M763.5,534 765,537 764,540 762.5,543.5 766,545.5 769.5,547.5 772.5,550M757,535 756.5,538 754.5,541 754,545 753.5,548 754.5,551 755.5,554 757,556.5 760,558 763,559.5 764.5,561.5M754,545 757,544.5 756.5,547 754,548M762.5,543.5 759,543 757,544.5M717,532.5 718.5,535 718,538 721,538.2 725,537.8 729,537.2 732,536 734.5,535M718.5,539.5 721,539.8 721,538.2M721,540 724,539.5 727,540 726.5,543 725.5,545.5 723,546.5 721.5,548 722.5,550 726,550.5 729,550 730.5,547.5 732,545 733,542 734,539 734.5,535M724,551.5 727,552.5 730,553 731.5,555 733,557 735.5,556.5 738,554.8 740.5,555.5 741,559 741.2,562M752,560 754,558 756,557.2M680,520 683,519.5 685,520.5 685.5,523.5 686,527 686.5,532M685.5,523.5 688,523 690,523.5 691,520.5 693,518 696,516 700,514.8 702.5,517 704,519 706,519.5 707,517 708,516 710,516M695,522 695,527 694.5,532M700.5,522 701,526 701.5,530M703.5,523 703.8,527 704,530M706.2,519.5 706.5,523 705.8,526 705.5,529.5M691,523.5 695,522 700.5,522 703.5,523 706.2,522M680,524 682.5,526 684.5,529 686.5,532M733.4,540 731.7,543.4 730,546 728.7,548.6 726.6,550.3 723.6,550.7M723.1,546 725.7,545.6 727.4,543.4 727,540.9M723.6,552.4 727.4,552.7 730.4,552.9 732.1,555.9 735.1,556.3 737.3,554.6 739.9,555.4 741.1,558.4 742,561.4 744.1,562.5 744.6,564.9 742,565.7 740.7,567.4 740.3,570.9 741.6,573.9 743.7,574.7M722.5,573 725.7,574.3 730,574.7 734.3,575 737.7,575.3 743.7,574.7 746.7,574.3M744.6,562.5 748,563.1 751.4,564 752.7,561.4 753.6,558.4 755.7,557.6 759.1,558.4 761.7,559.7 763.4,561M753.1,564.4 754.4,564 755.7,564.9 755.3,566.1 753.6,565.9 753.1,564.4M754.9,540 754.4,543.4 754,546.9 754.9,550.3 755.3,553.7 756.6,556.7 759.1,558.4M753.6,545.1 756.6,544.7 757,547.3 754.9,548.6M759.1,543.4 763,543.4 766.9,545.6 770.3,548.1 772.4,550.3M763.9,563.6 767.7,563.3 771.1,563 774.6,562.3M761.7,559.7 763.4,561.4 763,564.9 764.3,567.4 766,569.1 766.4,571.7 765.1,573 763.4,571.3 763,568.3 761.3,566.6 760.9,563.1 761.7,559.7M746.7,574.3 749.7,575.1 752.3,573.4 754.9,571.3 756.1,569.6 759.1,568.7 761.3,569.6M756.1,569.6 757,571.7 760.9,572.6 761.7,576 760.4,579.4 758.7,582.4 757.4,583.7 754.9,583.7 752.3,582.9 750.6,580.3 748.4,577.7 746.7,575.6M739,575.6 738.6,579.4 737.7,582.9 737.5,588 738.1,591.9 737.7,595.7 734.3,596.7 731.3,595.7M738.1,591.9 740.3,592.5 742,590.6 743.7,589.3 746.7,590.6 748.9,588.9 750.6,586.7 752.3,584.6 754.9,583.7M757.4,583.7 758.7,586.7 759.1,590.1M757,590.6 759.1,590.1 760.4,591.9 759.1,593.6 757.3,592.7 757,590.6M750.1,598.3 752.3,596.1 754.4,596.6 754.4,598.3 752.3,600 750.6,600 750.1,598.3M724.5,402.5 722.5,407 723,412 722.2,416 721.5,418.5M755.5,400 756.5,404 758.5,407.5 756,410 753.5,413 752.5,414.5M751.8,417 752,420.5 751.5,424.5 752.5,426.2M744.5,420.5 748,421 751.5,421M740.5,424.5 744,424 748,424.8 751.5,424.5M740,426.2 743,426.8 746,425.8 748,425M748,427.5 750,426.2 752.5,426.2 756,427 758,429 759,432 760.5,434 758.5,435 756,437 754,438.2 750,437.5 746,437.2 744.5,437.5M727.2,429 727,433 727.8,436 727.5,438.5 731,439.5 734,441 737.5,442 741,443 743,441.5 744.5,437.5 744,434 743.5,431 742.5,429 740,426.5M714,430 713.5,434 713,438 712.5,442 714,444 718,445 722,444.5 725,444M723.5,440 727.5,438.5M723.5,440 724,442.5 727,444 731,444.5 734,443 737.5,442M717,447 721,446.2 725,447 729.5,446.5 731,444.5M717,447 718,449 722,449.5 726,449 729.5,448.5 730.5,446.5M730.5,446.5 734,445.5 738,445 742,445.5 741,448 739,450 735,451 731.5,450 730,448.5M713.5,446 716.5,445.5 717,447.5 714.5,449 712.5,448.5 713.5,446M707.5,438.5 710,438 712.5,439 713.5,440 711.5,441 709,440.5M760.5,434 763,436 764.5,438.5 769,440 773,441.5 774,444 772.5,446.5 770,448M750,445.5 752.5,446.5 754.5,449 753.5,451 751.5,448 750,445.5M741,443 742.5,445 746,446 750,445.5M739,450 742,448 746,446.2M741,454 745,455.5 749,455 752.5,454.5 754,452.5M742,458 746,459 750,458.5 751.5,457M735,451 737,454 736,457 738.5,459 740,462 742,463.5M731,452 734,454 735.5,457 737,460 738,463M738.5,459 742,458 741,454 739,450M737,460 740,460.5 742,460M714.8,455.5 716.5,453 720,452 723.5,451.5 725.5,451 728,450 730,448.5M698.5,457.2 702,458 705,459M777,460.5 779,462 781.5,464 783,466.5 782,469 780,470 777,470.5 773,471 769,471.5 766.5,471.2M777,458 780,458.5 783,459 786,460 789,461M780,462 783,462.5 786,464 788.5,465 790,464M783,466.5 786,466 789,467 790.5,467M767,473.5 770,473 774,472.5 777,470.5M774,472.5 775,476 773,479 770,480 768,481.5M782,469 783.5,472 785,476 787.5,479 788.5,483 787,485M773,479 777,481 781,484 785,486 786.5,485M766.5,479 769,478.5 770.5,480 769,483 766.5,485 765,483.5M765.2,479 766,480 765.5,483.5M786.5,444 787.5,441 791,438.5 795,437.2 799,438 802.5,440 807,439.5 811.5,439 813.5,436.5 812.5,433 815,431.5 820,430.5 825,429.5 830,428.5M803,453 806,452 810,452.5 813.5,454.5 816,456 820,456.5 822,459 824,462 827,464 830,462.5M801,462 804,460 807,458.5 810,459 813,461 815.5,464 819,466 822,468 824,469M803,453 803.5,457 804,460M824,469 821,471 817,474 813.5,474.5 811.5,477 812,481 813.5,485 813,487 817,486.5 821,486 824,483 828,480 830,478M813.5,487 815,490 816,493 814,494M688.8,457 688.1,460.5 687.5,464.9 686.9,469.2 687.5,470.8M748.8,385.5 745.6,387.4 743.1,389.2 741.9,390.5 740,389 738.1,390.5 735.6,393 732.5,395.5 730,398.6 727.5,401.8 725.6,404.9 723.8,408 723.1,411.8 723.8,415.5 722.5,418 721.9,421.1 722.5,424.2M741.9,390.5 743.1,393 744.4,396.1 745,399M743.1,389.2 746.2,387.8 749.4,386.1 751.9,385.5 755,386.8 753.8,389.2 754.4,393 755.6,396.1 755,400.5 756.2,404.2 758.8,407.4 756.9,409.9 754.4,413 752.5,414.2M778.1,517.4 782.5,514.9 786.2,513 790,511.1 793.8,510.5 796.9,509.2M796.9,509.2 796.2,505.5 798.1,503 801.2,501.1 802.5,498M796.9,509.2 800,508 803.1,506.1M785,483 786.9,485.5 788.8,485.2M795,497.4 797.5,499.2 801.2,498.6M812.5,476.8 811.9,480.5 813.8,484.2 813.1,488 815,491.1 814.4,494.2M815,491.1 818.8,489.9 822.5,489.2 826.2,488 830,489.9M822.5,489.2 825,485.5 827.5,483 831.2,480.8 835,479.2 836.9,477.4M798.5,449 801,450 803,453M801,462 800,465 801,469 804,470 808,470.5 811.5,472.5 813.5,474.5M800,471.8 802.5,474.9 806.2,476.1 810,476.8 812.5,476.8M820,430 824,428.5 828,428 831,428.5 832.5,431 836,432.2 840,431.2 843,433 845,435.5 847,438.5 849,439.5 853,439.5 856,441 859,442.8 861,443.5M861,443.5 858.5,445.5 857,448 854.5,449 852,451 849,453 848,456 848.5,458.5M861,443.5 865,441 869.5,439.2 874,440.5 878,441.5 880,442 880.5,439 882,436.8 885,437 888,438.5 889.5,440 893,440.5 897,440.8 900,442.5 903,443.5 907,442.5 910.5,440.5 913.5,441.5 915,442M861,443.5 864,445.5 866.5,447.5 867.5,450 868,453 872,453.5 875.5,455 877,458 881,458.5 885,458.5 889,459.5 892,460.5 896,459.8 900,459.2 903.5,458.5 905.5,456 906,453.5 910,452.5 913,451 916,449.5 920,449 920.5,447.5 918.5,446.2 915.5,446.5 913,446 914,444 915,442M915,442 918.5,441.8 920,439 921.5,436 922,434 926,432.5 929.5,433.2 932,434.5 933.5,437.5 935,441 938,443 940,444.5 941.5,446.5 944.5,446.5 947,445.2 948,446.5 947,449 946,452 944,454 941.5,454 941,457M941,457 938,459.5 935,461.5 932,463 929.5,464.5M931,467.5 934,467 936,466.5M848.5,458.5 845,460 842,461 838,462.5 835,464 831,464.5 828,463.5 826,464 825,466 824.5,469 825.5,470.5 829,470.5 832,470 835,469 838,469M830,459 834,457.5 838,457 843,457.5 847,458.5 848,459M828,462 831,461 834,461.5 835,462.5 832,463.5 828,462M838,469 835,470.5 832.5,472.5 830.5,476 828.5,479 826,481.5 823,484 820,486.5M838,469 840,472 842.5,474 845,475.5M849,484.5 852,484.8 856,486.5 860,488.5 862.5,489.5 862,491 858,490.5 854,489.5 850,488 847.8,486.5M864,489 867,488.8 869.5,489.5 868,491 865,490.8 864,489M879,489 881,490 881.5,493 880,495.5 882,498 884,501 885.5,502.5 888,500.5 890,499 893,498.5 895.5,499.5 897,501 896,503 899,504 901,502.5M885.5,502.5 884,504.5 882,506M888,500.5 889,503 890.5,505 892,506M880,511.2 882,510 884,508 885.5,505 888,504 890,502 893,500 895.5,499.5 897,501.5M885.5,505 887,507 889,509 891,508.5 892.5,510 894,513 896,515 898,516.5 897,518.5 895,518 892.5,517.8 890,518.5M890,502 891,504.5 893,506.5 894.5,508.5 896.5,510 898,513 899,515.5 898,516.5M884.5,529 886.5,530 888,529.5M903.5,540.5 907,539.8 911,539 914,537 916,535M566.5,522.5 566,526 568,529 572,529.8 575.5,530.5 576.5,533.5 576,537 574,539M574,539 577,540 580,540.5 583,539 582.5,535.5 585.5,534.5 589,533 589.5,529 588.5,526.5M589.5,533 590.5,536 590,538.5 592.5,539.5 595,538.5 594,535 595,532M600,538 600.5,534.5 600,531.8M595,538.5 598,537.8 602,538 604.5,536.5 605.5,534.5M574,539 572,541 571.5,544 572,547 571,549 568,550.5 565.5,552 564.5,555 565,558 567,560 569.5,560.5 570.5,562 573,563M555,540 558.5,541 562,542 564.5,544 566,546.2 571,546.5M562,542 561.5,545 559,547 556,549 554,551.5 552.5,549M573,563 576,561 580,560 580.5,563 583,565 587,566.5 589.5,568 590,571 592.5,572.5 594.5,575 594,578M573,563 573.2,568 573,573 572,576 573,579 574.5,582 576,585M576,585 579,583 582,583.2 585,583 586,580 588,578.2 591,578 594,578 594,581 595.5,583 598,583.5 599,586 600.5,588.5 601.5,591.5 600,594 597,594.5 593.5,593.5 594,590.5 591,588.5 588,586.5 585.5,584.5 585,583M576,585 574,589 574.5,592.5 573.5,596M530,510.5 533,510 535.5,511 536,513M540,513.5 540.5,516.5M544,521.5 545,519 546.5,520M576.9,584.2 575.6,586.8 574.4,589.9 573.8,593.6 572.2,597.4 571.2,601.8 570.6,605.5 570,609.2 569.4,614.2 568.8,619.2 568.5,624.2 569,629.2 569.4,633 568.1,636.8 566.2,640.5 565.6,643 567.5,646.1 570.6,647.4 573.1,647.4M601.2,591.8 598.8,594.9 596.2,598 595,599.2 598.8,601.1 601.9,603 603.1,604.9M595,599.2 593.8,601.8 593.5,605.5 594,607.8M529.4,508.6 531.2,510.5 533.8,511.1 535.6,509.9 536.2,506.8 538.1,506.1"/>
<path fill="none" stroke="#fff" stroke-width="0.8" d="M959.8,547.2 959.8,558.8"/>
<path fill="none" stroke="#fff" stroke-width="0.9" d="M441.1,386.2 441.1,416"/>
</g></svg>
<svg style="left:207px;top:83px" width="20" height="20" viewBox="0 0 20 20"><circle cx="10.1" cy="10" r="8" fill="none" stroke="#949ca5" stroke-width="1.1"/><path d="M7.5 8.2c0-1.6 1.2-2.6 2.7-2.6s2.6 1 2.6 2.3c0 1.2-.7 1.8-1.5 2.4-.7.5-1.1.9-1.1 1.9" fill="none" stroke="#949ca5" stroke-width="1.2" stroke-linecap="round"/><circle cx="10.2" cy="14.3" r=".8" fill="#949ca5"/></svg>
<svg style="left:252px;top:84px" width="18" height="18" viewBox="0 0 18 18"><g fill="none" stroke="#9aa1a8" stroke-width="1.3"><path d="M2.6 11.2A6.2 6.2 0 0 1 8.6 3h1"/><path d="M14.4 6.8A6.2 6.2 0 0 1 8.6 15h-1"/></g><path d="M9.2 .6l3.6 2.5-3.6 2.5z" fill="#9aa1a8"/><path d="M8 12.4l-3.6 2.5 3.6 2.5z" fill="#9aa1a8"/></svg>
<svg style="left:1316px;top:87px" width="16" height="12" viewBox="0 0 16 12"><path d="M2.3 3.3l5.5 5.3 5.5-5.3" fill="none" stroke="#5a6169" stroke-width="2" stroke-linecap="round" stroke-linejoin="round"/></svg>
<svg style="left:78px;top:178px" width="18" height="16" viewBox="0 0 18 16"><g fill="none" stroke="#6c757d" stroke-width="1.1"><circle cx="5.6" cy="3.7" r="2"/><circle cx="9.3" cy="3.7" r="2"/><path d="M1.6 13.4V12c0-2.6 1.8-4.3 4.2-4.3h2.6c2.4 0 4.2 1.7 4.2 4.3v1.4z"/><path d="M11.6 7.5c2 .5 3.9 2 3.9 4.6v1.3h-2.4"/></g></svg>
<svg style="left:733px;top:178px" width="20" height="16" viewBox="0 0 20 16"><g fill="none" stroke="#596068" stroke-width="1.3" stroke-linecap="round" stroke-linejoin="round"><path d="M2.3 12.6l4.2-5.3 3.1 3.3 6.6-7"/><path d="M11.4 3.5h5.3v5.2"/></g></svg>
<svg style="left:1308px;top:305px" width="18" height="13" viewBox="0 0 18 13"><path d="M2 3.3l6.6 6.2 6.6-6.2" fill="none" stroke="#495057" stroke-width="1.5" stroke-linecap="round" stroke-linejoin="round"/></svg>
<svg style="left:1290px;top:543px" width="22" height="22" viewBox="0 0 22 22"><g fill="none" stroke="#2b3035" stroke-width="1.3" stroke-linecap="round" stroke-linejoin="round"><path d="M14.8 4.6A7.6 7.6 0 1 0 18 11"/><path d="M15.2 1.2v3.6h-3.6"/></g></svg>
<svg style="left:947px;top:697px" width="22" height="22" viewBox="0 0 22 22"><g fill="none" stroke="#6c757d" stroke-width="1.6" stroke-linecap="round"><circle cx="8.6" cy="8.8" r="6"/><path d="M13.1 13.4l5 5.2"/></g></svg>
<svg style="left:1209px;top:759px" width="12" height="14" viewBox="0 0 12 14"><g fill="none" stroke="#495057" stroke-width="1.5" stroke-linecap="round" stroke-linejoin="round"><path d="M5.7 2.6v7.6"/><path d="M3 7.8l2.7 2.8 2.7-2.8"/></g></svg>
<svg style="left:84px;top:635px" width="62" height="18" viewBox="0 0 62 18"><path d="M13 14.6h10c3 0 4.3-9.4 8-9.4 2.6 0 3.3 4.6 5.5 4.6 2.1 0 3.3-4.6 5.6-4.6 3.5 0 5 9.4 8.300 9.400h9" fill="none" stroke="#dcdcdc" stroke-width="1.3"/><path d="M1.200 14.700h10.500c4.300 0 5.600-12 11-12s6.600 12 11 12h16" fill="none" stroke="#9aa1aa" stroke-width="1.500"/></svg>
<div class="t" style="left:61.9px;top:84.00px;font-size:18.75px;color:#212529;-webkit-text-stroke:0.53px #212529;letter-spacing:0.54px;">Security Events</div>
<div class="t" style="left:272.6px;top:85.00px;font-size:15px;color:#6c757d;letter-spacing:0.27px;">Last Updated at Mar 22, 2023 16:18</div>
<div class="t" style="left:1018px;top:85.00px;font-size:15px;color:#6c757d;letter-spacing:0.23px;">Security Events for</div>
<div class="t" style="left:1180.4px;top:85.00px;font-size:15px;color:#545b62;letter-spacing:0.09px;">Last 7 Days</div>
<div class="t" style="left:103.5px;top:178.00px;font-size:15px;color:#212529;-webkit-text-stroke:0.42px #212529;letter-spacing:0.11px;">Access Events</div>
<div class="t" style="left:758.8px;top:178.00px;font-size:15px;color:#212529;-webkit-text-stroke:0.42px #212529;letter-spacing:0.66px;">Unusual Data Activity</div>
<div class="t" style="left:79.6px;top:209.00px;font-size:20.57px;color:#212529;-webkit-text-stroke:0.58px #212529;">0</div>
<div class="t" style="left:286.3px;top:209.00px;font-size:20.57px;color:#212529;-webkit-text-stroke:0.58px #212529;">0</div>
<div class="t" style="left:493px;top:209.00px;font-size:20.57px;color:#212529;-webkit-text-stroke:0.58px #212529;letter-spacing:-0.29px;">37</div>
<div class="t" style="left:735.3px;top:209.00px;font-size:20.57px;color:#212529;-webkit-text-stroke:0.58px #212529;">0</div>
<div class="t" style="left:942px;top:209.00px;font-size:20.57px;color:#212529;-webkit-text-stroke:0.58px #212529;">0</div>
<div class="t" style="left:1148.7px;top:209.00px;font-size:20.57px;color:#212529;-webkit-text-stroke:0.58px #212529;">0</div>
<div class="t" style="left:78.6px;top:235.00px;font-size:13.125px;color:#6c757d;letter-spacing:-0.03px;">Data Access Locations</div>
<div class="t" style="left:286.3px;top:235.00px;font-size:13.125px;color:#6c757d;letter-spacing:-0.06px;">API Request Locations</div>
<div class="t" style="left:493px;top:235.00px;font-size:13.125px;color:#6c757d;letter-spacing:0.15px;">Admin Login Locations</div>
<div class="t" style="left:735.3px;top:235.00px;font-size:13.125px;color:#6c757d;">Active Alerts in Last 7 Days</div>
<div class="t" style="left:941px;top:235.00px;font-size:13.125px;color:#6c757d;letter-spacing:0.34px;">Impacted Endpoints</div>
<div class="t" style="left:1148.1px;top:235.00px;font-size:13.125px;color:#6c757d;letter-spacing:0.08px;">Impacted File Backupsets</div>
<div class="t" style="left:88.5px;top:305.00px;font-size:13.125px;color:#3773b5;letter-spacing:-0.05px;">Data Access</div>
<div class="t" style="left:179.2px;top:305.00px;font-size:13.125px;color:#ffffff;letter-spacing:0.36px;">Admin Login</div>
<div class="t" style="left:273.5px;top:305.00px;font-size:13.125px;color:#3773b5;letter-spacing:-0.13px;">API Requests</div>
<div class="t" style="left:88.3px;top:346.00px;font-size:31.65px;color:#212529;-webkit-text-stroke:0.89px #212529;letter-spacing:0.3px;">37</div>
<div class="t" style="left:93.2px;top:384.00px;font-size:13.125px;color:#6c757d;letter-spacing:0.04px;">Admin Login Events</div>
<div class="t" style="left:89px;top:404.00px;font-size:23.21px;color:#212529;-webkit-text-stroke:0.65px #212529;letter-spacing:-0.4px;">37</div>
<div class="t" style="left:103.4px;top:436.00px;font-size:13.125px;color:#6c757d;letter-spacing:0.15px;">Locations Available</div>
<div class="t" style="left:1041.4px;top:303.00px;font-size:15px;color:#343a40;letter-spacing:0.39px;">New Locations</div>
<div class="t" style="left:1187.7px;top:303.00px;font-size:15px;color:#343a40;letter-spacing:0.24px;">All Locations</div>
<div class="t" style="left:84.4px;top:614.00px;font-size:15px;color:#212529;letter-spacing:-0.19px;">Less</div>
<div class="t" style="left:348.8px;top:614.00px;font-size:15px;color:#212529;letter-spacing:1.16px;">More</div>
<div class="t" style="left:596px;top:703.00px;font-size:15px;color:#343a40;letter-spacing:0.38px;">Admin Login Events | 37 of 37</div>
<div class="t" style="left:975.7px;top:701.00px;font-size:15px;color:#a3adb8;letter-spacing:0.17px;">Search by Name</div>
<div class="t" style="left:79px;top:757.00px;font-size:15px;color:#495057;-webkit-text-stroke:0.42px #495057;letter-spacing:-0.2px;">Job ID</div>
<div class="t" style="left:195.6px;top:757.00px;font-size:15px;color:#495057;-webkit-text-stroke:0.42px #495057;letter-spacing:1.24px;">Name</div>
<div class="t" style="left:404.9px;top:757.00px;font-size:15px;color:#495057;-webkit-text-stroke:0.42px #495057;letter-spacing:0.39px;">IP Address</div>
<div class="t" style="left:614.8px;top:757.00px;font-size:15px;color:#495057;-webkit-text-stroke:0.42px #495057;letter-spacing:0.86px;">Location</div>
<div class="t" style="left:917.6px;top:757.00px;font-size:15px;color:#495057;-webkit-text-stroke:0.42px #495057;letter-spacing:0.38px;">Login Result</div>
<div class="t" style="left:1126.9px;top:757.00px;font-size:15px;color:#495057;-webkit-text-stroke:0.42px #495057;letter-spacing:0.64px;">Login Time</div>
<div class="t" style="left:79.3px;top:799.00px;font-size:15.82px;color:#2b3035;letter-spacing:-0.38px;">5648208</div>
<div class="t" style="left:196.6px;top:799.00px;font-size:15px;color:#3773b5;letter-spacing:0.02px;">Colin West</div>
<div class="t" style="left:405.9px;top:799.00px;font-size:15px;color:#2b3035;letter-spacing:0.15px;">86.143.88.240</div>
<div class="t" style="left:615.8px;top:799.00px;font-size:15px;color:#2b3035;letter-spacing:0.47px;">Aldershot, United Kingdom</div>
<div class="t" style="left:918.6px;top:799.00px;font-size:15px;color:#2b3035;letter-spacing:-0.3px;">Success</div>
<div class="t" style="left:1127.2px;top:799.00px;font-size:15px;color:#2b3035;letter-spacing:0.06px;">Mar 22, 2023 16:17 UTC</div>
<div class="t" style="left:79.3px;top:842.00px;font-size:15.82px;color:#2b3035;letter-spacing:-0.38px;">5647733</div>
<div class="t" style="left:196.6px;top:842.00px;font-size:15px;color:#3773b5;letter-spacing:-0.16px;">JP Bachmann</div>
<div class="t" style="left:405.9px;top:842.00px;font-size:15px;color:#2b3035;letter-spacing:0.12px;">4.34.36.50</div>
<div class="t" style="left:615.8px;top:842.00px;font-size:15px;color:#2b3035;letter-spacing:0.34px;">Aurora, United States</div>
<div class="t" style="left:918.6px;top:842.00px;font-size:15px;color:#2b3035;letter-spacing:-0.3px;">Success</div>
<div class="t" style="left:1127.2px;top:842.00px;font-size:15px;color:#2b3035;letter-spacing:0.06px;">Mar 22, 2023 14:49 UTC</div>
<div class="t" style="left:79.3px;top:885.00px;font-size:15.82px;color:#2b3035;letter-spacing:-0.38px;">5647076</div>
<div class="t" style="left:195.6px;top:885.00px;font-size:15px;color:#3773b5;letter-spacing:0.5px;">Mike Goodrich</div>
<div class="t" style="left:404.9px;top:885.00px;font-size:15px;color:#2b3035;letter-spacing:0.28px;">174.29.115.242</div>
<div class="t" style="left:614.8px;top:885.00px;font-size:15px;color:#2b3035;letter-spacing:0.4px;">United States</div>
<div class="t" style="left:918.6px;top:885.00px;font-size:15px;color:#2b3035;letter-spacing:-0.3px;">Success</div>
<div class="t" style="left:1127.2px;top:885.00px;font-size:15px;color:#2b3035;letter-spacing:0.06px;">Mar 22, 2023 12:57 UTC</div>
<div class="t" style="left:1296.2px;top:588.5px;font-size:15px;font-weight:700;color:#2b3035;">+</div><div class="t" style="left:1298px;top:625.5px;font-size:15px;font-weight:700;color:#2b3035;">-</div>
</body></html>
